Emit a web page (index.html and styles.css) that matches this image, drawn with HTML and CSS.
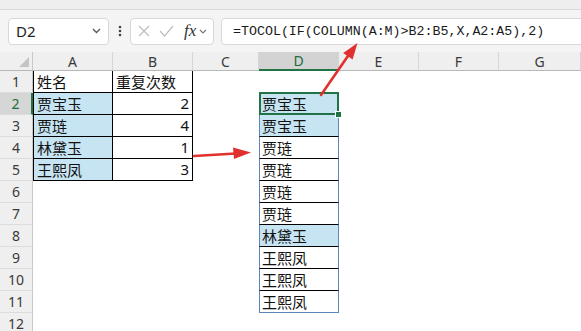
FILE: index.html
```html
<!DOCTYPE html>
<html lang="zh">
<head>
<meta charset="utf-8">
<title>TOCOL</title>
<link rel="stylesheet" href="styles.css">
</head>
<body>
<div class="top"></div>
<div class="fbar">
  <div class="namebox"><span class="ref">D2</span>
    <svg class="chev" width="9" height="6" viewBox="0 0 9 6"><path d="M1 1 L4.5 4.5 L8 1" fill="none" stroke="#555" stroke-width="1.3"/></svg>
  </div>
  <div class="dots"><svg width="4" height="12" viewBox="0 0 4 12"><circle cx="2" cy="2" r="1.3" fill="#444"/><circle cx="2" cy="6" r="1.3" fill="#444"/><circle cx="2" cy="10" r="1.3" fill="#444"/></svg></div>
  <div class="fxbox">
    <svg width="12" height="12" viewBox="0 0 12 12"><path d="M1 1 L11 11 M11 1 L1 11" stroke="#bdbdbd" stroke-width="1.2" fill="none"/></svg>
    <svg width="15" height="12" viewBox="0 0 15 12"><path d="M1 6 L5.5 11 L14 1" stroke="#bdbdbd" stroke-width="1.2" fill="none"/></svg>
    <span class="fx">fx</span>
    <svg width="8" height="5" viewBox="0 0 8 5"><path d="M1 1 L4 4 L7 1" fill="none" stroke="#777" stroke-width="1.1"/></svg>
  </div>
  <div class="formula">=TOCOL(IF(COLUMN(A:M)&gt;B2:B5,X,A2:A5),2)</div>
</div>
<div class="sheet">
  <div class="corner"></div>
  <div class="ch">A</div><div class="ch">B</div><div class="ch">C</div><div class="ch sel">D</div><div class="ch">E</div><div class="ch">F</div><div class="ch">G</div>

  <div class="rh">1</div><div class="c b bl">姓名</div><div class="c b">重复次数</div><div class="c"></div><div class="c"></div><div class="c"></div><div class="c"></div><div class="c"></div>
  <div class="rh sel">2</div><div class="c b bl hl">贾宝玉</div><div class="c b num">2</div><div class="c"></div><div class="c sp hl act">贾宝玉</div><div class="c"></div><div class="c"></div><div class="c"></div>
  <div class="rh">3</div><div class="c b bl hl">贾琏</div><div class="c b num">4</div><div class="c"></div><div class="c sp hl">贾宝玉</div><div class="c"></div><div class="c"></div><div class="c"></div>
  <div class="rh">4</div><div class="c b bl hl">林黛玉</div><div class="c b num">1</div><div class="c"></div><div class="c sp">贾琏</div><div class="c"></div><div class="c"></div><div class="c"></div>
  <div class="rh">5</div><div class="c b bl hl">王熙凤</div><div class="c b num">3</div><div class="c"></div><div class="c sp">贾琏</div><div class="c"></div><div class="c"></div><div class="c"></div>
  <div class="rh">6</div><div class="c"></div><div class="c"></div><div class="c"></div><div class="c sp">贾琏</div><div class="c"></div><div class="c"></div><div class="c"></div>
  <div class="rh">7</div><div class="c"></div><div class="c"></div><div class="c"></div><div class="c sp">贾琏</div><div class="c"></div><div class="c"></div><div class="c"></div>
  <div class="rh">8</div><div class="c"></div><div class="c"></div><div class="c"></div><div class="c sp hl">林黛玉</div><div class="c"></div><div class="c"></div><div class="c"></div>
  <div class="rh">9</div><div class="c"></div><div class="c"></div><div class="c"></div><div class="c sp">王熙凤</div><div class="c"></div><div class="c"></div><div class="c"></div>
  <div class="rh">10</div><div class="c"></div><div class="c"></div><div class="c"></div><div class="c sp">王熙凤</div><div class="c"></div><div class="c"></div><div class="c"></div>
  <div class="rh">11</div><div class="c"></div><div class="c"></div><div class="c"></div><div class="c sp spl">王熙凤</div><div class="c"></div><div class="c"></div><div class="c"></div>
  <div class="rh">12</div><div class="c"></div><div class="c"></div><div class="c"></div><div class="c"></div><div class="c"></div><div class="c"></div><div class="c"></div>
</div>
<svg class="arrows" width="581" height="331" viewBox="0 0 581 331">
  <path d="M194 156 L236 153.5" stroke="#e0312e" stroke-width="2.6" fill="none" stroke-linecap="round"/>
  <path d="M251 152.6 L233 147.5 L234 159 Z" fill="#e0312e"/>
  <path d="M321 95 L349 54.5" stroke="#e0312e" stroke-width="2.6" fill="none" stroke-linecap="round"/>
  <path d="M357.5 43 L352.6 59.5 L343.2 53 Z" fill="#e0312e"/>
</svg>
</body>
</html>
```
FILE: styles.css
```css
html, body {
  margin: 0;
  padding: 0;
}
body {
  width: 581px;
  height: 331px;
  overflow: hidden;
  position: relative;
  background: #ffffff;
  font-family: "Noto Sans", "Noto Sans CJK SC", sans-serif;
}
.top {
  height: 9px;
  background: #eeeeee;
  border-bottom: 1px solid #d9d9d9;
}
.fbar {
  height: 42px;
  display: flex;
  align-items: center;
  padding-left: 8px;
  background: #f4f4f4;
  box-sizing: border-box;
}
.namebox {
  width: 101px;
  height: 27px;
  box-sizing: border-box;
  background: #fff;
  border: 1px solid #d8d8d8;
  border-radius: 4px;
  display: flex;
  align-items: center;
  justify-content: space-between;
  padding: 0 7px 0 7px;
}
.ref {
  font-size: 15px;
  color: #222;
}
.dots {
  width: 21px;
  display: flex;
  justify-content: center;
  align-items: center;
}
.fxbox {
  width: 84px;
  height: 27px;
  box-sizing: border-box;
  background: #fff;
  border: 1px solid #d8d8d8;
  border-radius: 4px;
  display: flex;
  align-items: center;
  padding-left: 7px;
  gap: 9px;
}
.fx {
  font-family: "Liberation Serif", serif;
  font-style: italic;
  font-size: 17px;
  color: #333;
  margin-left: 1px;
  margin-right: -6px;
}
.formula {
  flex: 1;
  margin-left: 7px;
  margin-right: -8px;
  height: 27px;
  box-sizing: border-box;
  background: #fff;
  border: 1px solid #d8d8d8;
  border-radius: 4px;
  display: flex;
  align-items: center;
  padding-left: 11px;
  font-family: "Liberation Mono", monospace;
  font-size: 13.3px;
  color: #1a1a1a;
  white-space: nowrap;
}
.sheet {
  display: grid;
  grid-template-columns: 33px 80px 80px 66px 80px 80px 80px 1fr;
  grid-template-rows: 19px repeat(12, 22px);
}
.corner {
  background: #efefef;
  border-bottom: 1px solid #b8b8b8;
  border-right: 1px solid #c8c8c8;
  box-sizing: border-box;
  position: relative;
}
.corner::after {
  content: "";
  position: absolute;
  right: 3px;
  bottom: 3px;
  border-style: solid;
  border-width: 0 0 10px 10px;
  border-color: transparent transparent #c4c4c4 transparent;
}
.ch {
  background: #efefef;
  border-bottom: 1px solid #b8b8b8;
  border-right: 1px solid #d6d6d6;
  box-sizing: border-box;
  display: flex;
  align-items: center;
  justify-content: center;
  font-size: 14px;
  color: #3a3a3a;
}
.ch.sel {
  background: #d3d3d3;
  color: #1d6b40;
  border-bottom: 2px solid #217346;
}
.rh {
  background: #efefef;
  border-right: 1px solid #c8c8c8;
  border-bottom: 1px solid #dcdcdc;
  box-sizing: border-box;
  display: flex;
  align-items: center;
  justify-content: center;
  font-size: 14px;
  color: #3a3a3a;
}
.rh.sel {
  background: #d6d6d6;
  color: #1d6b40;
  border-right: 2px solid #217346;
}
.c {
  box-sizing: border-box;
  font-family: "Noto Sans CJK SC", "Noto Sans", sans-serif;
  font-size: 15px;
  line-height: 21px;
  padding: 0 2px 0 3px;
  color: #111;
  white-space: nowrap;
  position: relative;
}
.b {
  border-right: 1px solid #000;
  border-bottom: 1px solid #000;
}
.bl {
  border-left: 1px solid #000;
}
.num {
  text-align: right;
  font-family: "Noto Sans", sans-serif;
  padding-right: 3px;
}
.hl {
  background: #c7e4f2;
}
.sp {
  border-left: 1px solid #5c86b8;
  border-right: 1px solid #5c86b8;
  border-bottom: 1px solid #000;
  padding-left: 2px;
}
.sp.spl {
  border-bottom-color: #5c86b8;
}
.act::after {
  content: "";
  position: absolute;
  left: -1px;
  top: -1px;
  right: -1px;
  bottom: -1px;
  border: 2px solid #217346;
}
.act::before {
  content: "";
  position: absolute;
  right: -4px;
  bottom: -4px;
  width: 5px;
  height: 5px;
  background: #217346;
  border: 1px solid #fff;
  z-index: 2;
}
.arrows {
  position: absolute;
  left: 0;
  top: 0;
  pointer-events: none;
}
```
